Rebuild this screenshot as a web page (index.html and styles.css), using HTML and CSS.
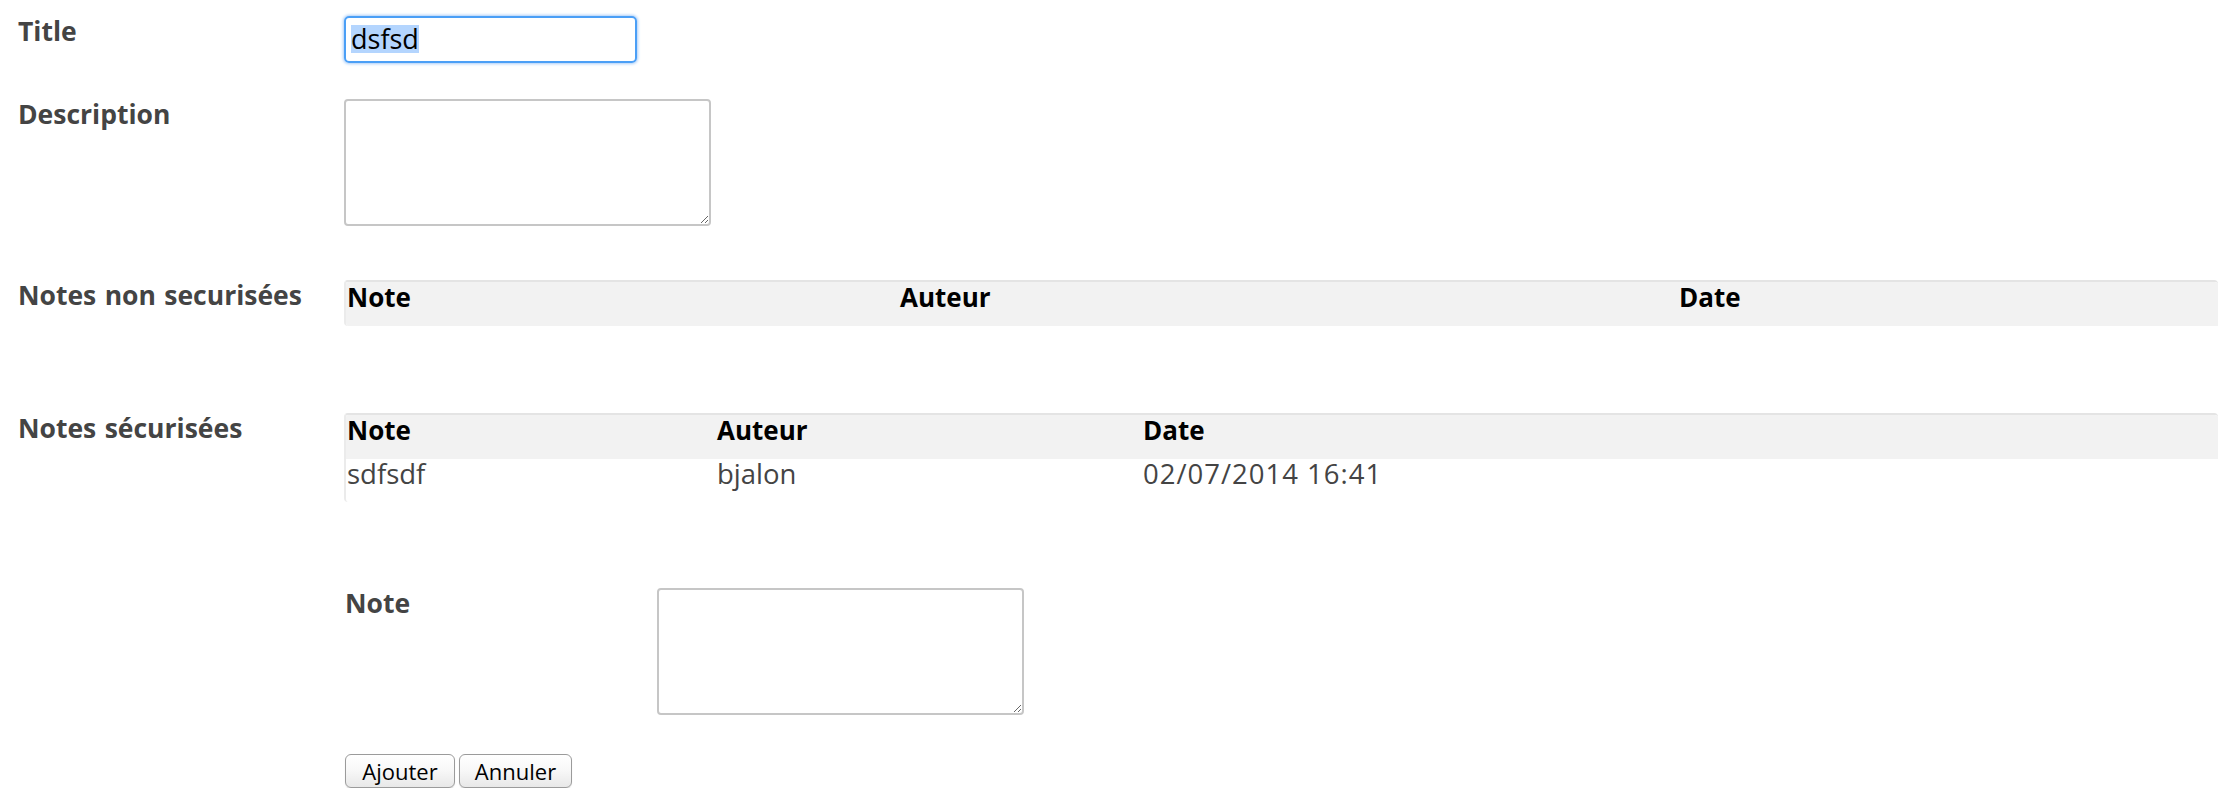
FILE: index.html
```html
<!DOCTYPE html>
<html lang="fr">
<head>
<meta charset="utf-8">
<title>Note</title>
<link rel="stylesheet" href="styles.css">
</head>
<body>
<form class="form">
  <div class="row row-title">
    <label class="label">Title</label>
    <div class="field">
      <div class="text-input focused"><span class="sel">dsfsd</span></div>
    </div>
  </div>
  <div class="row row-desc">
    <label class="label">Description</label>
    <div class="field">
      <textarea class="area"></textarea>
    </div>
  </div>
  <div class="row row-notes1">
    <label class="label">Notes non securisées</label>
    <div class="field wide">
      <div class="table-wrap">
        <table class="grid grid-a">
          <colgroup><col class="a1"><col class="a2"><col></colgroup>
          <thead><tr><th>Note</th><th>Auteur</th><th>Date</th></tr></thead>
        </table>
      </div>
    </div>
  </div>
  <div class="row row-notes2">
    <label class="label">Notes sécurisées</label>
    <div class="field wide">
      <div class="table-wrap">
        <table class="grid grid-b">
          <colgroup><col class="b1"><col class="b2"><col></colgroup>
          <thead><tr><th>Note</th><th>Auteur</th><th>Date</th></tr></thead>
          <tbody><tr><td>sdfsdf</td><td>bjalon</td><td class="date">02/07/2014 16:41</td></tr></tbody>
        </table>
      </div>
    </div>
  </div>
  <div class="row row-sub">
    <div class="label spacer"></div>
    <div class="field">
      <div class="subrow">
        <label class="label sublabel">Note</label>
        <textarea class="area"></textarea>
      </div>
      <div class="buttons">
        <button type="button" class="btn btn-add">Ajouter</button>
        <button type="button" class="btn btn-cancel">Annuler</button>
      </div>
    </div>
  </div>
</form>
</body>
</html>
```
FILE: styles.css
```css
html, body {
  margin: 0;
  background: #ffffff;
}
body {
  padding: 16px 22px 0 18px;
  font-family: "Open Sans", "DejaVu Sans", sans-serif;
  font-size: 26px;
  line-height: 30px;
  color: #444444;
}
.form {
  display: flex;
  flex-direction: column;
}
.row {
  display: flex;
  align-items: flex-start;
}
.label {
  width: 326px;
  flex: none;
  font-size: 26.5px;
  font-weight: 700;
  word-spacing: 1.5px;
  color: #444444;
  white-space: nowrap;
}
.field {
  flex: none;
}
.field.wide {
  flex: 1;
}
.row-title { margin-bottom: 36px; }
.row-desc { margin-bottom: 54px; }
.row-notes1 { margin-bottom: 87px; }
.row-notes2 { margin-bottom: 86px; }

.text-input {
  box-sizing: border-box;
  width: 293px;
  height: 47px;
  border: 2px solid #4b9ff6;
  border-radius: 5px;
  box-shadow: 0 0 3px 1px #a9cdf8;
  padding: 7px 0 0 5px;
  font-size: 27px;
  line-height: 28px;
  color: #000000;
}
.sel {
  background: #b4d5fe;
  display: inline-block;
  line-height: 28px;
}
.area {
  display: block;
  box-sizing: border-box;
  width: 367px;
  height: 127px;
  margin: 0;
  border: 2px solid #c6c6c6;
  border-radius: 4px;
  background: #ffffff;
  font-family: "Open Sans", sans-serif;
  font-size: 22px;
  resize: both;
}

.table-wrap {
  border-top: 2px solid #e4e4e4;
  border-left: 2px solid #ebebeb;
  border-radius: 4px 4px 0 4px;
  overflow: hidden;
}
.grid {
  width: 100%;
  border-collapse: collapse;
  table-layout: fixed;
}
.grid th {
  background: #f2f2f2;
  color: #000000;
  font-size: 26px;
  font-weight: 700;
  text-align: left;
  padding: 0 2px 14px 1px;
  height: 30px;
  white-space: nowrap;
}
.grid td {
  padding: 0 2px 13px 1px;
  font-size: 27.5px;
  color: #444444;
  text-align: left;
  white-space: nowrap;
}
.grid td.date {
  letter-spacing: 1px;
}
.a1 { width: 553px; }
.a2 { width: 779px; }
.b1 { width: 370px; }
.b2 { width: 426px; }

.subrow {
  display: flex;
  align-items: flex-start;
  margin-bottom: 39px;
}
.sublabel {
  width: 312px;
  padding-left: 1px;
}
.buttons {
  display: flex;
  gap: 4px;
  padding-left: 1px;
}
.btn {
  box-sizing: border-box;
  height: 34px;
  margin: 0;
  padding: 0;
  border: 1px solid #9b9b9b;
  border-radius: 6px;
  background: linear-gradient(#ffffff 0%, #f7f7f7 50%, #e8e8e8 100%);
  box-shadow: 0 1px 1px rgba(0,0,0,0.12);
  font-family: "Open Sans", sans-serif;
  font-size: 22px;
  line-height: 30px;
  color: #000000;
}
.btn-add { width: 110px; }
.btn-cancel { width: 113px; }
```
